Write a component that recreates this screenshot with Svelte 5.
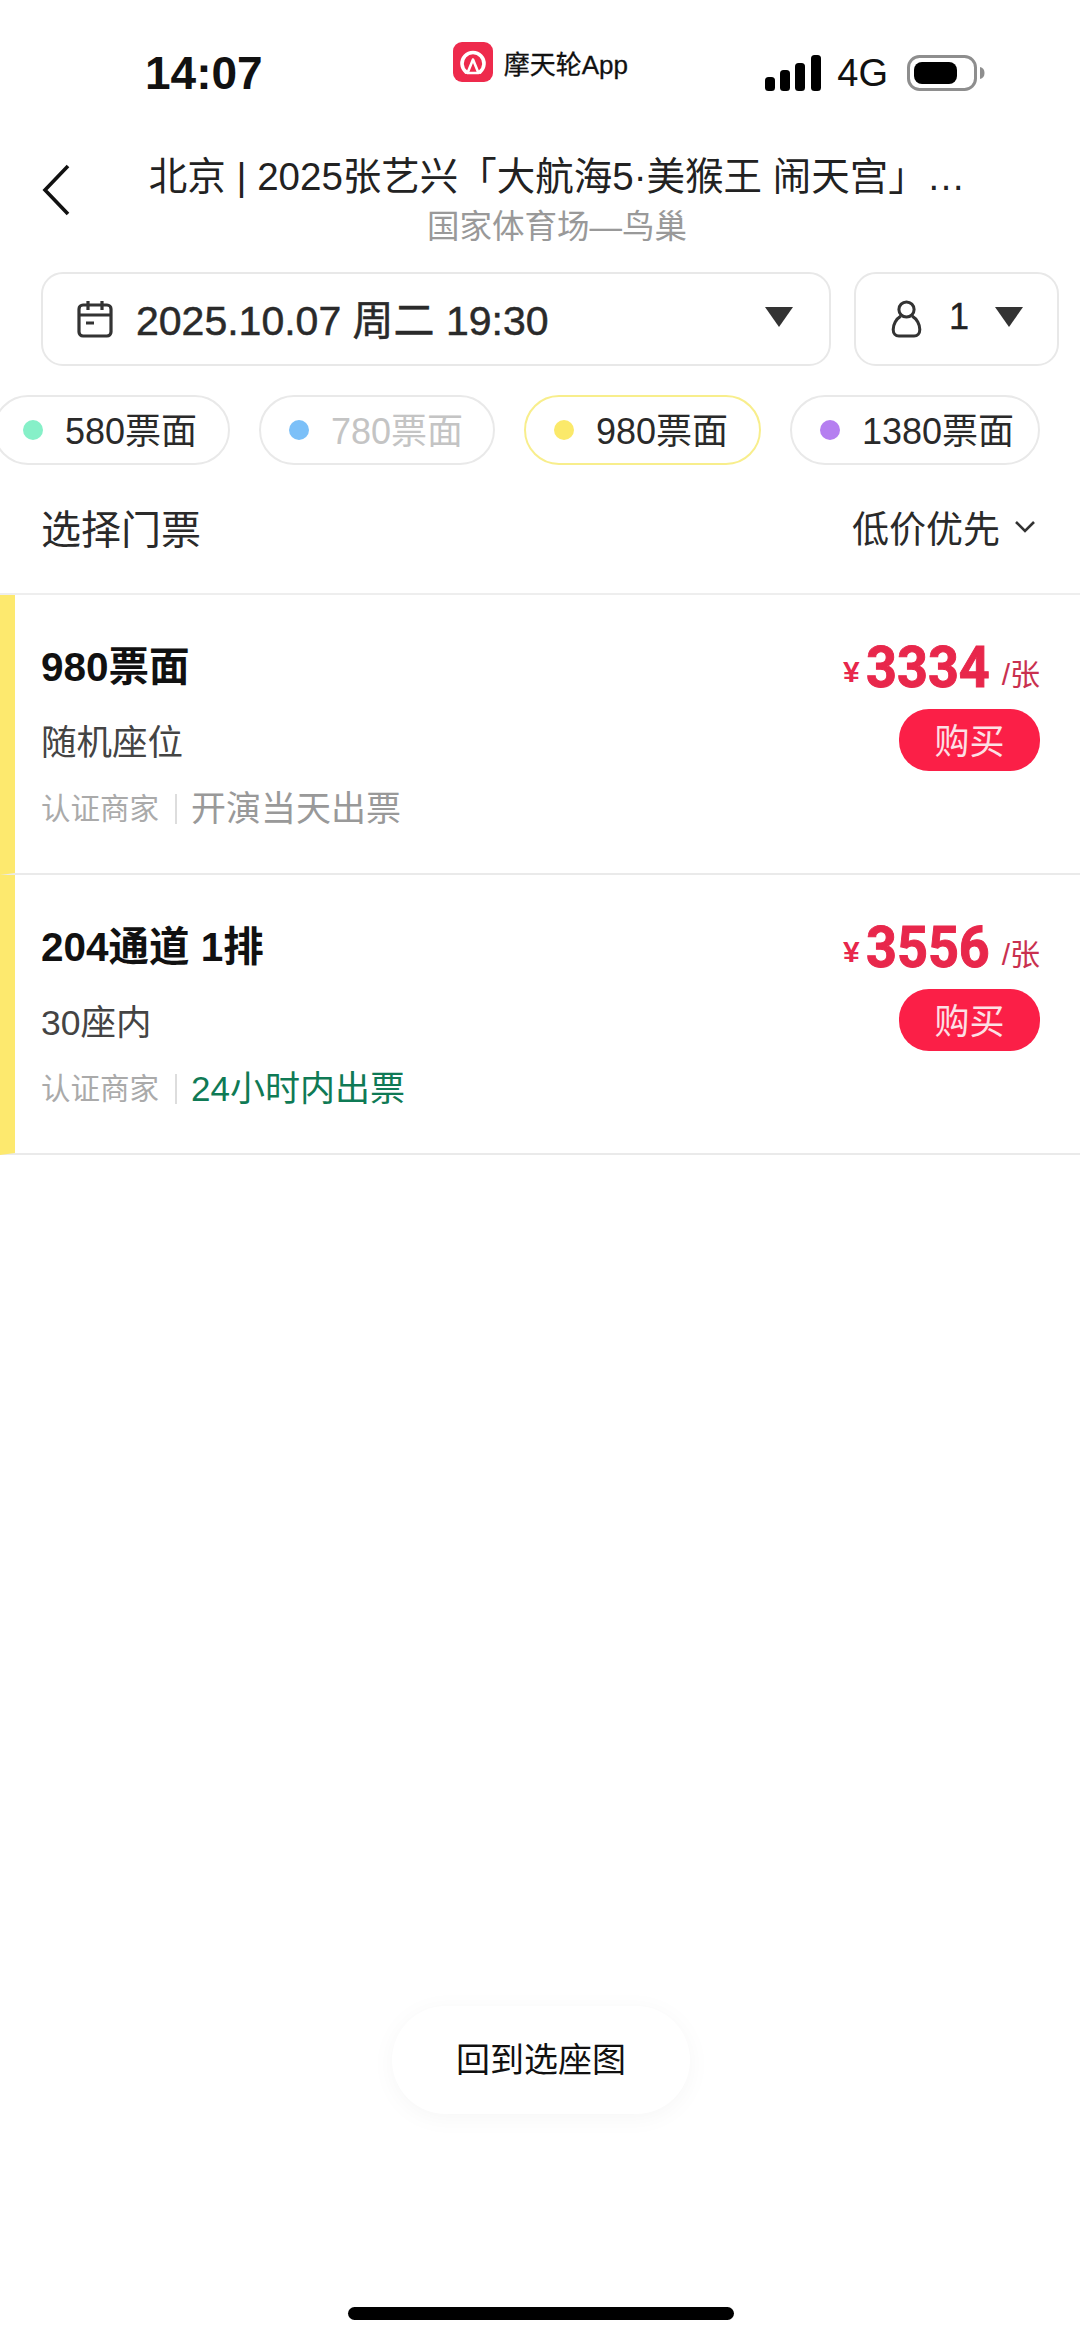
<script>
  const pills = [
    { label: '580票面', color: '#86f0c8', width: 237, off: false },
    { label: '780票面', color: '#7cc0f8', width: 236, off: true },
    { label: '980票面', color: '#fbe96a', width: 237, active: true },
    { label: '1380票面', color: '#b57ff0', width: 250, off: false }
  ];

  const tickets = [
    { title: '980票面', seat: '随机座位', price: '3334', ship: '开演当天出票', fast: false },
    { title: '204通道 1排', seat: '30座内', price: '3556', ship: '24小时内出票', fast: true }
  ];
</script>

<div class="page">
  <header class="status">
    <span class="time">14:07</span>
    <div class="source">
      <svg class="logo" viewBox="0 0 40 40" aria-hidden="true">
        <rect width="40" height="40" rx="9" fill="#ee2a4c" />
        <path d="M13 30a11 11 0 1 1 14 0" fill="none" stroke="#fff" stroke-width="3.600" stroke-linecap="round" />
        <path d="M20 17.500 14.500 31h11L20 17.500Z" fill="none" stroke="#fff" stroke-width="2.600" stroke-linejoin="round" />
      </svg>
      <span>摩天轮App</span>
    </div>
    <div class="indicators">
      <svg class="signal" viewBox="0 0 57 36" aria-hidden="true">
        <rect x="0" y="22" width="10" height="14" rx="3.500" />
        <rect x="15" y="15" width="10" height="21" rx="3.500" />
        <rect x="30" y="8" width="10" height="28" rx="3.500" />
        <rect x="46" y="0" width="10" height="36" rx="3.500" />
      </svg>
      <span class="net">4G</span>
      <svg class="battery" viewBox="0 0 78 36" aria-hidden="true">
        <rect x="1.500" y="1.500" width="67" height="33" rx="11" fill="none" stroke="#8e8e8e" stroke-width="3" />
        <rect x="7" y="7" width="43" height="22" rx="8" fill="#000" />
        <path d="M73 12c3 .5 4.500 3 4.500 6s-1.500 5.500-4.500 6Z" fill="#8e8e8e" />
      </svg>
    </div>
  </header>

  <nav class="titlebar">
    <svg class="back" viewBox="0 0 28 52" aria-hidden="true">
      <path d="M26 2 3 26l23 24" fill="none" stroke="#111" stroke-width="3.600" />
    </svg>
    <div class="heading">
      <div class="title">北京 | 2025张艺兴「大航海5·美猴王 闹天宫」…</div>
      <div class="venue">国家体育场—鸟巢</div>
    </div>
  </nav>

  <section class="selectors">
    <div class="box date">
      <svg class="cal" viewBox="0 0 36 38" aria-hidden="true">
        <path d="M11 1v9M25 1v9M6 5h24a4 4 0 0 1 4 4v23a4 4 0 0 1-4 4H6a4 4 0 0 1-4-4V9a4 4 0 0 1 4-4ZM2 15h32M9 23h8" fill="none" stroke="#333" stroke-width="3.200" />
      </svg>
      <span class="when">2025.10.07 周二 19:30</span>
      <i class="caret"></i>
    </div>
    <div class="box people">
      <svg class="person" viewBox="0 0 32 40" aria-hidden="true">
        <circle cx="16" cy="10" r="8" fill="none" stroke="#333" stroke-width="3.200" />
        <path d="M10 17C5 20 2 26 2 31c0 4 2.500 7 6 7h16c3.500 0 6-3 6-7 0-5-3-11-8-14" fill="none" stroke="#333" stroke-width="3.200" />
      </svg>
      <span class="count">1</span>
      <i class="caret"></i>
    </div>
  </section>

  <div class="pills">
    {#each pills as p}
      <div class="pill" class:off={p.off} class:active={p.active} style="width: {p.width}px">
        <i class="dot" style="background: {p.color}"></i>
        <span>{p.label}</span>
      </div>
    {/each}
  </div>

  <div class="listhead">
    <span class="pick">选择门票</span>
    <div class="sort">
      <span>低价优先</span>
      <svg viewBox="0 0 22 14" aria-hidden="true">
        <path d="M2 2l9 9 9-9" fill="none" stroke="#333" stroke-width="2.600" />
      </svg>
    </div>
  </div>

  <div class="list">
    {#each tickets as t}
      <article class="ticket">
        <div class="info">
          <h3>{t.title}</h3>
          <p class="seat">{t.seat}</p>
          <p class="meta">
            <span class="seller">认证商家</span>
            <span class="ship" class:fast={t.fast}>{t.ship}</span>
          </p>
        </div>
        <div class="buy">
          <div class="price">
            <span class="yen">¥</span>
            <span class="num">{t.price}</span>
            <span class="unit">/张</span>
          </div>
          <button>购买</button>
        </div>
      </article>
    {/each}
  </div>

  <button class="floating">回到选座图</button>
  <div class="homebar"></div>
</div>

<style>
  :global(body) {
    margin: 0;
    background: #fff;
  }

  .page {
    position: relative;
    width: 1080px;
    height: 2340px;
    overflow: hidden;
    background: #fff;
    color: #222;
    font-family: "Liberation Sans", "Noto Sans CJK SC", sans-serif;
  }

  .status {
    display: flex;
    align-items: center;
    height: 132px;
    padding: 14px 95px 0 145px;
    box-sizing: border-box;
  }

  .time {
    width: 309px;
    font-size: 46px;
    font-weight: 700;
    color: #111;
  }

  .source {
    display: flex;
    align-items: center;
    gap: 11px;
    width: 314px;
    margin-top: -22px;
    font-size: 26px;
    color: #111;
    -webkit-text-stroke: 0.3px #111;
  }

  .logo {
    width: 40px;
    height: 40px;
  }

  .indicators {
    display: flex;
    align-items: center;
  }

  .signal {
    width: 57px;
    height: 36px;
    fill: #000;
  }

  .net {
    margin-left: 15px;
    font-size: 38px;
    color: #111;
  }

  .battery {
    width: 78px;
    height: 36px;
    margin-left: 19px;
  }

  .titlebar {
    display: flex;
    align-items: flex-start;
    height: 140px;
    padding-left: 42px;
    box-sizing: border-box;
  }

  .back {
    width: 28px;
    height: 52px;
    margin-top: 32px;
  }

  .heading {
    margin-left: 77px;
    width: 820px;
    text-align: center;
  }

  .title {
    margin: 22px -10px 0;
    font-size: 38.500px;
    line-height: 46px;
    white-space: nowrap;
    color: #222;
  }

  .venue {
    margin-top: 7px;
    font-size: 32.500px;
    line-height: 40px;
    color: #999;
  }

  .selectors {
    display: flex;
    gap: 23px;
    padding-left: 41px;
  }

  .box {
    display: flex;
    align-items: center;
    height: 94px;
    box-sizing: border-box;
    background: #fff;
    border: 2px solid #e8e8e8;
    border-radius: 22px;
  }

  .date {
    width: 790px;
    padding-left: 34px;
  }

  .cal {
    width: 36px;
    height: 38px;
  }

  .when {
    margin-left: 23px;
    margin-bottom: 5px;
    flex: 1;
    font-size: 41px;
    color: #2a2a2a;
    -webkit-text-stroke: 0.5px #2a2a2a;
  }

  .caret {
    flex: none;
    width: 0;
    height: 0;
    margin-bottom: 4px;
    border-left: 14.500px solid transparent;
    border-right: 14.500px solid transparent;
    border-top: 20px solid #333;
  }

  .date .caret {
    margin-right: 36px;
  }

  .people {
    width: 205px;
    padding-left: 35px;
  }

  .person {
    width: 31px;
    height: 38px;
  }

  .count {
    margin-left: 27px;
    margin-bottom: 4px;
    width: 46px;
    font-size: 36px;
    color: #222;
    -webkit-text-stroke: 0.4px #222;
  }

  .pills {
    display: flex;
    gap: 29px;
    margin-top: 29px;
    margin-left: -7px;
  }

  .pill {
    display: flex;
    align-items: center;
    flex: none;
    height: 70px;
    box-sizing: border-box;
    padding: 0 0 4px 28px;
    border: 2px solid #e9e9e9;
    border-radius: 35px;
    font-size: 36px;
    color: #2a2a2a;
  }

  .pill.off {
    color: #c4c4c4;
  }

  .pill.active {
    border-color: #f8ee8c;
  }

  .dot {
    flex: none;
    width: 20px;
    height: 20px;
    margin: 4px 22px 0 0;
    border-radius: 50%;
  }

  .listhead {
    display: flex;
    align-items: center;
    justify-content: space-between;
    height: 124px;
    padding: 0 44px 4px 41px;
  }

  .pick {
    font-size: 40px;
    color: #2a2a2a;
  }

  .sort {
    display: flex;
    align-items: center;
    gap: 14px;
    font-size: 37px;
    color: #2a2a2a;
  }

  .sort svg {
    width: 22px;
    height: 14px;
  }

  .list {
    border-top: 2px solid #eee;
  }

  .ticket {
    display: flex;
    justify-content: space-between;
    height: 280px;
    box-sizing: border-box;
    padding: 0 40px 0 26px;
    border-left: 15px solid #fde96e;
    border-bottom: 2px solid #eaeaea;
  }

  .info h3 {
    margin: 49px 0 0;
    font-size: 40.500px;
    line-height: 46px;
    font-weight: 700;
    color: #111;
  }

  .seat {
    margin: 31px 0 0;
    font-size: 35.500px;
    line-height: 44px;
    color: #444;
  }

  .meta {
    display: flex;
    align-items: center;
    margin: 22px 0 0;
    line-height: 44px;
  }

  .seller {
    padding-right: 16px;
    font-size: 29.500px;
    line-height: 30px;
    color: #aaa;
    border-right: 2px solid #ddd;
  }

  .ship {
    margin-left: 14px;
    font-size: 35px;
    color: #999;
  }

  .ship.fast {
    color: #0f7a55;
  }

  .buy {
    display: flex;
    flex-direction: column;
    align-items: flex-end;
    padding-top: 37px;
  }

  .price {
    display: flex;
    align-items: center;
    height: 70px;
    color: #e8274b;
  }

  .yen {
    margin-top: 9px;
    font-size: 30px;
    font-weight: 700;
  }

  .num {
    display: inline-block;
    width: 122.500px;
    margin-left: 6.500px;
    font-family: Roboto, sans-serif;
    font-size: 58px;
    font-weight: 700;
    line-height: 70px;
    transform: scaleX(0.93);
    transform-origin: left;
    white-space: nowrap;
    -webkit-text-stroke: 1px #e8274b;
  }

  .unit {
    margin: 9px 0 0 13px;
    font-size: 30px;
    color: #c9304f;
  }

  .buy button {
    width: 141px;
    height: 62px;
    margin-top: 7px;
    padding: 0 0 3px;
    border: 0;
    border-radius: 30px;
    background: #fb1f47;
    color: #fde0e5;
    font-family: inherit;
    font-size: 35px;
  }

  .floating {
    position: absolute;
    left: 392px;
    top: 2006px;
    width: 298px;
    height: 108px;
    padding: 0 0 6px;
    border: 0;
    border-radius: 54px;
    background: #fff;
    box-shadow: 0 4px 24px rgba(0, 0, 0, 0.04);
    color: #111;
    font-family: inherit;
    font-size: 34px;
  }

  .homebar {
    position: absolute;
    left: 348px;
    top: 2307px;
    width: 386px;
    height: 13px;
    border-radius: 7px;
    background: #000;
  }
</style>
